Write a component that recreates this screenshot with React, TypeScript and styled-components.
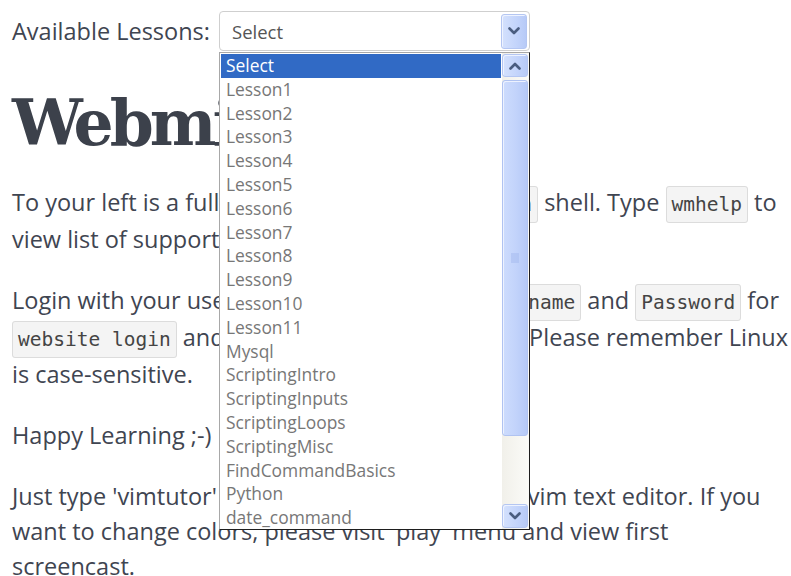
import React from 'react'
import styled, {createGlobalStyle} from 'styled-components'

const GlobalStyle = createGlobalStyle`
  body {
    margin: 0;
    background: #ffffff;
    font-family: "Open Sans", "Liberation Sans", sans-serif;
    color: #3f4551;
  }
`

const Page = styled.main`
  width: 779px;
  padding: 11px 0 0 12px;
`

const LessonBar = styled.div`
  display: flex;
  align-items: center;
  gap: 9px;
  font-size: 23.5px;
`

const SelectWrap = styled.div`
  position: relative;
  width: 311px;
`

const SelectBox = styled.div`
  box-sizing: border-box;
  height: 40px;
  display: flex;
  align-items: center;
  justify-content: space-between;
  padding: 0 2px 0 12px;
  border: 1px solid #cfcfcf;
  border-radius: 4px;
  font-size: 18.5px;
  color: #555;
`

const ArrowButton = styled.div<{$h: number}>`
  box-sizing: border-box;
  width: 26px;
  height: ${p => p.$h}px;
  display: flex;
  align-items: center;
  justify-content: center;
  border: 1px solid #b4c6f2;
  border-radius: 3px;
  background: linear-gradient(90deg, #d4e1fd 0%, #c3d4fb 60%, #b7caf7 100%);
  box-shadow: inset 1px 1px 0 #eef3ff;
  flex-shrink: 0;
`

const DropList = styled.div`
  position: absolute;
  top: 41px;
  left: 0;
  box-sizing: border-box;
  width: 311px;
  height: 478px;
  display: flex;
  background: #ffffff;
  border-left: 1px solid #a8a8a8;
  border-top: 1px solid #a8a8a8;
  border-right: 1px solid #1e1e1e;
  border-bottom: 1px solid #1e1e1e;
  z-index: 5;
`

const Options = styled.ul`
  flex: 1;
  list-style: none;
  margin: 0;
  padding: 1px 1px 0 1px;
  overflow: hidden;
`

const Option = styled.li<{$active?: boolean}>`
  height: 23.8px;
  line-height: 23.8px;
  padding-left: 5px;
  font-size: 17.4px;
  white-space: nowrap;
  color: ${p => (p.$active ? '#ffffff' : '#777777')};
  background: ${p => (p.$active ? '#316ac5' : 'transparent')};
`

const ScrollBar = styled.div`
  width: 27px;
  display: flex;
  flex-direction: column;
  gap: 2px;
  padding: 1px 1px 1px 0;
  box-sizing: border-box;
  background: linear-gradient(90deg, #f1f0ea 0%, #fbfbf8 100%);
`

const Thumb = styled.div`
  box-sizing: border-box;
  height: 356px;
  display: flex;
  align-items: center;
  justify-content: center;
  border: 1px solid #b0c3f1;
  border-radius: 3px;
  background: linear-gradient(90deg, #cddcfd 0%, #c2d3fb 55%, #b5c9f7 100%);
  box-shadow: inset 1px 1px 0 #edf2ff;
  margin-top: 1px;
`

const Track = styled.div`
  flex: 1;
`

const Heading = styled.h1`
  margin: 38px 0 27px;
  font-family: "DejaVu Serif", "Liberation Serif", serif;
  font-size: 63px;
  font-weight: 700;
  letter-spacing: -4px;
  line-height: 1.1;
  color: #3c414b;
`

const Text = styled.p`
  margin: 0 0 26px;
  font-size: 23.5px;
  line-height: 35px;
`

const Code = styled.code`
  font-family: "DejaVu Sans Mono", "Liberation Mono", monospace;
  font-size: 19.5px;
  color: #444;
  padding: 6px 5px;
  background: #f4f4f4;
  border: 1px solid #dcdcdc;
  border-radius: 3px;
`

const Chevron = ({up}: {up?: boolean}) => (
    <svg width="12" height="8" viewBox="0 0 12 8">
        <polyline
            points={up ? '1.5,6.5 6,2 10.5,6.5' : '1.5,1.5 6,6 10.5,1.5'}
            fill="none"
            stroke="#4a5d80"
            strokeWidth="2.6"
            strokeLinecap="round"
            strokeLinejoin="round"
        />
    </svg>
)

const Grip = () => (
    <svg width="10" height="10" viewBox="0 0 10 10">
        {[1, 3, 5, 7, 9].map(y => (
            <line key={y} x1="1" x2="9" y1={y} y2={y} stroke="#a4b9ee" strokeWidth="1"/>
        ))}
    </svg>
)

const lessons = [
    'Select', 'Lesson1', 'Lesson2', 'Lesson3', 'Lesson4', 'Lesson5', 'Lesson6',
    'Lesson7', 'Lesson8', 'Lesson9', 'Lesson10', 'Lesson11', 'Mysql',
    'ScriptingIntro', 'ScriptingInputs', 'ScriptingLoops', 'ScriptingMisc',
    'FindCommandBasics', 'Python', 'date_command',
]

const App = () => {
    const selected = 'Select'
    return (
        <Page>
            <GlobalStyle/>
            <LessonBar>
                <span>Available Lessons:</span>
                <SelectWrap>
                    <SelectBox>
                        <span>{selected}</span>
                        <ArrowButton $h={35}><Chevron/></ArrowButton>
                    </SelectBox>
                    <DropList>
                        <Options>
                            {lessons.map(name => (
                                <Option key={name} $active={name === selected}>{name}</Option>
                            ))}
                        </Options>
                        <ScrollBar>
                            <ArrowButton $h={23}><Chevron up/></ArrowButton>
                            <Thumb><Grip/></Thumb>
                            <Track/>
                            <ArrowButton $h={24}><Chevron/></ArrowButton>
                        </ScrollBar>
                    </DropList>
                </SelectWrap>
            </LessonBar>

            <Heading>Webminal</Heading>

            <Text>
                To your left is a fully functional GNU/Linux <Code>bash</Code> shell. Type <Code>wmhelp</Code> to
                view list of supported commands.
            </Text>
            <Text>
                Login with your user credentials, then use <Code>Username</Code> and <Code>Password</Code> for{' '}
                <Code>website login</Code> and use the same for ssh login. Please remember Linux is
                case-sensitive.
            </Text>
            <Text>Happy Learning ;-)</Text>
            <Text>
                Just type 'vimtutor' program to learn about the vim text editor. If you want to change colors,
                please visit 'play' menu and view first screencast.
            </Text>
        </Page>
    )
}

export default App
